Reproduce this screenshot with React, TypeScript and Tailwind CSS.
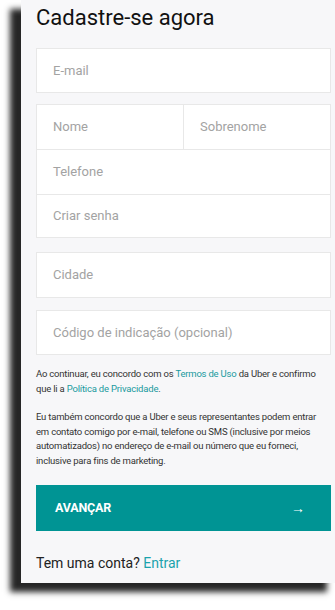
import React from "react";

const inputBox = "bg-white border border-[#e8e8e8] flex items-center pl-[16px] text-[13px] text-[#a3a3a3]";

export default function App() {
  return (
    <div className="w-[335px] h-[610px] bg-white overflow-hidden relative" style={{ fontFamily: "Roboto, 'Liberation Sans', sans-serif" }}>
      <div className="ml-[21px] w-[317px] h-[583px] bg-[#f7f7f9] shadow-[-11px_9px_6px_rgba(0,0,0,0.85)] pl-[15px]">
        <div className="w-[295px] pt-[4px]">
          <h1 className="text-[22px] leading-[28px] text-[#111] font-normal">Cadastre-se agora</h1>
          <div className={`${inputBox} h-[45px] mt-[16px]`}>E-mail</div>
          <div className="mt-[11px] bg-white border border-[#e8e8e8]">
            <div className="flex h-[45px] border-b border-[#e8e8e8]">
              <div className="w-[147px] border-r border-[#e8e8e8] flex items-center pl-[16px] text-[13px] text-[#a3a3a3]">Nome</div>
              <div className="flex-1 flex items-center pl-[16px] text-[13px] text-[#a3a3a3]">Sobrenome</div>
            </div>
            <div className="h-[45px] border-b border-[#e8e8e8] flex items-center pl-[16px] text-[13px] text-[#a3a3a3]">Telefone</div>
            <div className="h-[42px] flex items-center pl-[16px] text-[13px] text-[#a3a3a3]">Criar senha</div>
          </div>
          <div className={`${inputBox} h-[46px] mt-[14px]`}>Cidade</div>
          <div className={`${inputBox} h-[45px] mt-[12px]`}>Código de indicação (opcional)</div>
          <div className="mt-[12px] text-[9.5px] leading-[14.5px] tracking-[-0.2px] text-[#333]">
            <p>
              Ao continuar, eu concordo com os <span className="text-[#1a9a9e]">Termos de Uso</span> da Uber e confirmo que li a <span className="text-[#1a9a9e]">Política de Privacidade</span>.
            </p>
            <p className="mt-[14px]">
              Eu também concordo que a Uber e seus representantes podem entrar em contato comigo por e-mail, telefone ou SMS (inclusive por meios automatizados) no endereço de e-mail ou número que eu forneci, inclusive para fins de marketing.
            </p>
          </div>
          <div className="mt-[17px] h-[46px] bg-[#009494] flex items-center justify-between pl-[19px] pr-[26px] text-white">
            <span className="text-[12.5px] font-bold tracking-[-0.2px]">AVANÇAR</span>
            <span className="text-[14px]">→</span>
          </div>
          <div className="mt-[22px] text-[14px] text-[#222]">
            Tem uma conta? <span className="text-[#1aa3ad]">Entrar</span>
          </div>
        </div>
      </div>
    </div>
  );
}
